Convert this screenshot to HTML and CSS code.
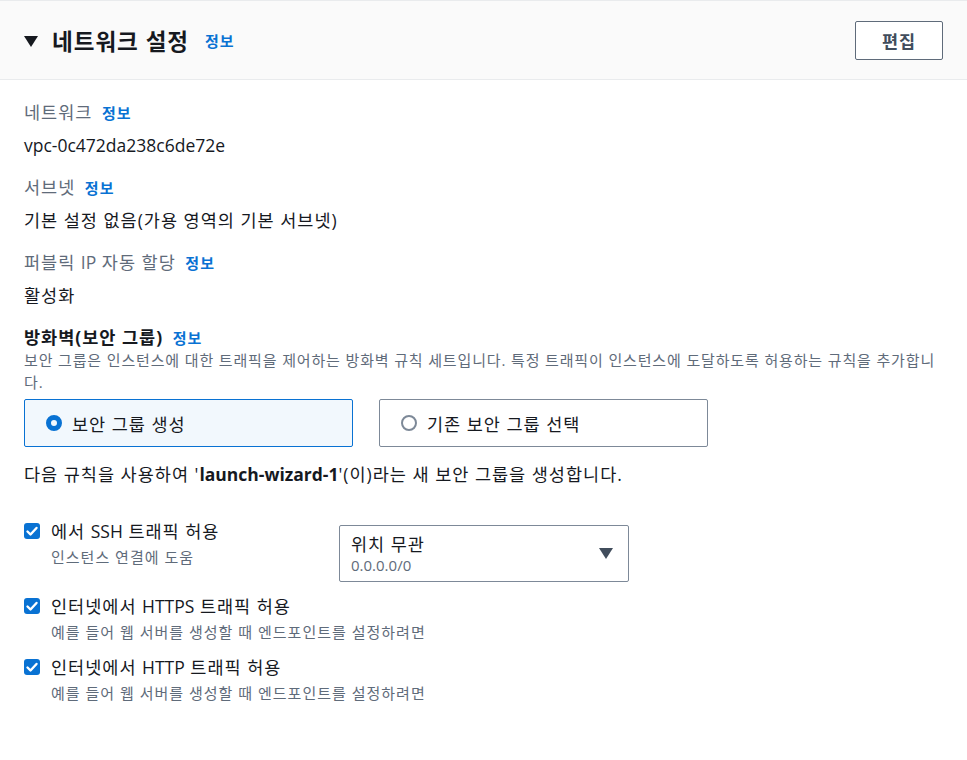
FILE: index.html
```html
<!DOCTYPE html>
<html lang="ko">
<head>
    <meta charset="UTF-8">
    <meta name="viewport" content="width=device-width, initial-scale=1.0">
    <title>네트워크 설정</title>
    <link rel="stylesheet" href="styles.css">
</head>
<body>
    <div class="panel-header">
        <div class="panel-title">
            <span class="caret"></span>
            <h2>네트워크 설정</h2>
            <a class="info" href="#">정보</a>
        </div>
        <button class="edit-btn">편집</button>
    </div>

    <div class="panel-body">
        <div class="field">
            <div class="label">네트워크 <a class="info" href="#">정보</a></div>
            <div class="value"><span class="en">vpc-0c472da238c6de72e</span></div>
        </div>
        <div class="field">
            <div class="label">서브넷 <a class="info" href="#">정보</a></div>
            <div class="value">기본 설정 없음(가용 영역의 기본 서브넷)</div>
        </div>
        <div class="field">
            <div class="label">퍼블릭 <span class="en">IP</span> 자동 할당 <a class="info" href="#">정보</a></div>
            <div class="value">활성화</div>
        </div>

        <div class="firewall">
            <div class="label strong">방화벽(보안 그룹) <a class="info" href="#">정보</a></div>
            <div class="desc">보안 그룹은 인스턴스에 대한 트래픽을 제어하는 방화벽 규칙 세트입니다. 특정 트래픽이 인스턴스에 도달하도록 허용하는 규칙을 추가합니다.</div>
            <div class="tiles">
                <div class="tile selected">
                    <span class="radio checked"></span>
                    <span>보안 그룹 생성</span>
                </div>
                <div class="tile">
                    <span class="radio"></span>
                    <span>기존 보안 그룹 선택</span>
                </div>
            </div>
            <p class="note">다음 규칙을 사용하여 '<b class="en">launch-wizard-1</b>'(이)라는 새 보안 그룹을 생성합니다.</p>
        </div>

        <div class="rules">
            <div class="rule">
                <div class="rule-check">
                    <span class="checkbox"><svg viewBox="0 0 16 16" width="16" height="16"><path d="M3.5 8.5l3 3 6-6.5" fill="none" stroke="#fff" stroke-width="2.4" stroke-linecap="round" stroke-linejoin="round"/></svg></span>
                    <div>
                        <div class="rule-label">에서 <span class="en">SSH</span> 트래픽 허용</div>
                        <div class="rule-desc">인스턴스 연결에 도움</div>
                    </div>
                </div>
                <div class="select">
                    <div>
                        <div class="select-main">위치 무관</div>
                        <div class="select-sub en">0.0.0.0/0</div>
                    </div>
                    <span class="select-caret"></span>
                </div>
            </div>
            <div class="rule">
                <div class="rule-check">
                    <span class="checkbox"><svg viewBox="0 0 16 16" width="16" height="16"><path d="M3.5 8.5l3 3 6-6.5" fill="none" stroke="#fff" stroke-width="2.4" stroke-linecap="round" stroke-linejoin="round"/></svg></span>
                    <div>
                        <div class="rule-label">인터넷에서 <span class="en">HTTPS</span> 트래픽 허용</div>
                        <div class="rule-desc">예를 들어 웹 서버를 생성할 때 엔드포인트를 설정하려면</div>
                    </div>
                </div>
            </div>
            <div class="rule">
                <div class="rule-check">
                    <span class="checkbox"><svg viewBox="0 0 16 16" width="16" height="16"><path d="M3.5 8.5l3 3 6-6.5" fill="none" stroke="#fff" stroke-width="2.4" stroke-linecap="round" stroke-linejoin="round"/></svg></span>
                    <div>
                        <div class="rule-label">인터넷에서 <span class="en">HTTP</span> 트래픽 허용</div>
                        <div class="rule-desc">예를 들어 웹 서버를 생성할 때 엔드포인트를 설정하려면</div>
                    </div>
                </div>
            </div>
        </div>
    </div>
</body>
</html>
```

FILE: styles.css
```css
body {
    margin: 0;
    font-family: "Open Sans", "Noto Sans CJK SC", sans-serif;
    font-size: 17.5px;
    letter-spacing: 1px; /* hangul runs a bit wider than the fallback font */
    color: #16191f;
    background-color: #ffffff;
}
.en {
    letter-spacing: 0;
}
.panel-header {
    display: flex;
    justify-content: space-between;
    align-items: center;
    height: 78px;
    padding: 0 24px;
    background-color: #fafafa;
    border-top: 1px solid #e9ebed;
    border-bottom: 1px solid #e9ebed;
}
.panel-title {
    display: flex;
    align-items: center;
}
.caret {
    width: 0;
    height: 0;
    border-left: 7px solid transparent;
    border-right: 7px solid transparent;
    border-top: 11px solid #16191f;
    margin-right: 14px;
    margin-top: 2px;
}
h2 {
    margin: 0;
    font-size: 22.5px;
    font-weight: 700;
    margin-right: 12px;
}
.info {
    color: #0972d3;
    font-size: 15px;
    font-weight: 700;
    text-decoration: none;
    margin-left: 4px;
}
.edit-btn {
    font-family: inherit;
    font-size: 17.5px;
    font-weight: 700;
    letter-spacing: 1px;
    color: #414d5c;
    background: #ffffff;
    border: 1px solid #5f6b7a;
    border-radius: 2px;
    width: 88px;
    height: 39px;
}
.panel-body {
    padding: 21px 24px 40px;
}
.field {
    margin-bottom: 20px;
}
.label {
    line-height: 22px;
    color: #5f6b7a;
    margin-bottom: 10px;
}
.value {
    line-height: 22px;
}
.label.strong {
    color: #16191f;
    font-weight: 700;
    margin-bottom: 0;
}
.desc {
    font-size: 15px;
    line-height: 22px;
    letter-spacing: 0.85px;
    color: #5f6b7a;
}
.tiles {
    display: flex;
    gap: 26px;
    margin-top: 6px;
}
.tile {
    display: flex;
    align-items: center;
    gap: 10px;
    width: 329px;
    height: 48px;
    box-sizing: border-box;
    padding-left: 21px;
    border: 1px solid #7d8998;
    border-radius: 2px;
}
.tile.selected {
    background-color: #f2f8fd;
    border-color: #0972d3;
}
.radio {
    width: 16px;
    height: 16px;
    box-sizing: border-box;
    border: 2px solid #7d8998;
    border-radius: 50%;
}
.radio.checked {
    border: 5px solid #0972d3;
}
.note {
    margin: 16px 0 0;
    line-height: 22px;
}
.note b {
    font-weight: 700;
}
.rules {
    margin-top: 35px;
    display: flex;
    flex-direction: column;
    gap: 13px;
}
.rule {
    display: flex;
    align-items: flex-start;
}
.rule-check {
    display: flex;
    align-items: flex-start;
    gap: 11px;
    flex: 0 0 auto;
    min-width: 315px;
}
.checkbox {
    width: 16px;
    height: 16px;
    margin-top: 3px;
    border-radius: 3px;
    background-color: #0972d3;
    display: flex;
}
.rule-label {
    line-height: 22px;
}
.rule-desc {
    font-size: 15px;
    line-height: 22px;
    margin-top: 4px;
    color: #5f6b7a;
}
.select {
    display: flex;
    justify-content: space-between;
    align-items: center;
    width: 290px;
    height: 57px;
    box-sizing: border-box;
    margin-top: 5px;
    padding: 0 15px 0 11px;
    border: 1px solid #7d8998;
    border-radius: 2px;
}
.select-main {
    line-height: 22px;
}
.select-sub {
    font-size: 15px;
    line-height: 20px;
    color: #5f6b7a;
}
.select-caret {
    width: 0;
    height: 0;
    border-left: 7px solid transparent;
    border-right: 7px solid transparent;
    border-top: 11px solid #414d5c;
}
```
